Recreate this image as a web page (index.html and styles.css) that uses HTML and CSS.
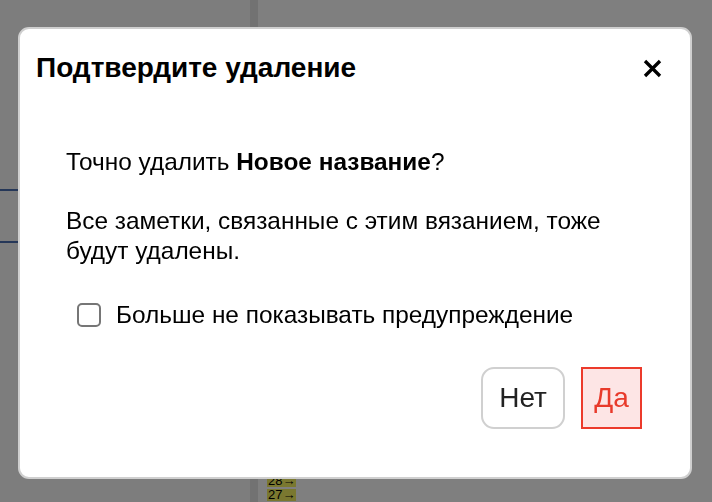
FILE: index.html
```html
<!DOCTYPE html>
<html lang="ru">
<head>
<meta charset="utf-8">
<title>Подтвердите удаление</title>
<link rel="stylesheet" href="styles.css">
</head>
<body>
<div class="page">
  <div class="sidebar">
    <div class="side-row"></div>
    <div class="side-row"></div>
  </div>
  <div class="divider"></div>
  <div class="content">
    <div class="list">
      <span class="tag">28→</span>
      <span class="tag">27→</span>
    </div>
  </div>
</div>
<div class="overlay"></div>
<div class="modal" role="dialog">
  <div class="modal-header">
    <h2 class="modal-title">Подтвердите удаление</h2>
    <button class="close" aria-label="Закрыть">
      <svg width="19" height="19" viewBox="0 0 19 19"><path d="M2 2 L17 17 M17 2 L2 17" stroke="#000" stroke-width="3.3" fill="none"/></svg>
    </button>
  </div>
  <div class="modal-body">
    <p class="q">Точно удалить <b>Новое название</b>?</p>
    <p class="note">Все заметки, связанные с этим вязанием, тоже будут удалены.</p>
    <label class="check"><span class="box"></span>Больше не показывать предупреждение</label>
  </div>
  <div class="modal-footer">
    <button class="btn btn-no">Нет</button>
    <button class="btn btn-yes">Да</button>
  </div>
</div>
</body>
</html>
```

FILE: styles.css
```css
html, body {
  margin: 0;
  padding: 0;
  height: 100%;
  font-family: "Liberation Sans", Arial, sans-serif;
}
.page {
  display: flex;
  height: 502px;
  background: #fff;
}
.sidebar {
  width: 250px;
  background: #fbfbfb;
  padding-top: 189px;
  box-sizing: border-box;
}
.side-row {
  height: 52px;
  border-top: 2px solid #4a6fb0;
  box-sizing: border-box;
}
.divider {
  width: 8px;
  background: #e4e4e4;
}
.content {
  flex: 1;
  background: #fff;
  display: flex;
  flex-direction: column;
  justify-content: flex-end;
  padding-left: 9px;
}
.list {
  display: flex;
  flex-direction: column;
  align-items: flex-start;
  gap: 2px;
  padding-bottom: 1px;
}
.tag {
  background: #f4f060;
  font-size: 13px;
  line-height: 12px;
  padding: 0 1px;
  color: #000;
}
.overlay {
  position: fixed;
  inset: 0;
  background: rgba(0,0,0,0.5);
}
.modal {
  position: fixed;
  left: 18px;
  top: 27px;
  width: 674px;
  height: 452px;
  box-sizing: border-box;
  background: #fff;
  border: 2px solid #cfcfcf;
  border-radius: 11px;
  display: flex;
  flex-direction: column;
}
.modal-header {
  display: flex;
  align-items: center;
  justify-content: space-between;
  padding: 23px 28px 0 16px;
}
.modal-title {
  margin: 0;
  font-size: 28px;
  line-height: 32px;
  font-weight: bold;
  color: #000;
}
.close {
  border: 0;
  background: none;
  padding: 0;
  width: 19px;
  height: 19px;
  display: flex;
}
.modal-body {
  padding: 63px 40px 0 46px;
  font-size: 24.4px;
  line-height: 30px;
  color: #000;
}
.modal-body p {
  margin: 0;
}
.note {
  margin-top: 29px !important;
}
.check {
  display: flex;
  align-items: center;
  margin-top: 34px;
  padding-left: 11px;
}
.box {
  width: 20px;
  height: 20px;
  border: 2px solid #767676;
  border-radius: 5px;
  margin-right: 15px;
  flex: none;
}
.modal-footer {
  display: flex;
  justify-content: flex-end;
  gap: 16px;
  padding: 37px 48px 0 0;
}
.btn {
  height: 62px;
  font-family: "Liberation Sans", Arial, sans-serif;
  font-size: 28px;
  box-sizing: border-box;
  padding: 0;
}
.btn-no {
  width: 84px;
  background: #fff;
  border: 2px solid #d0d0d0;
  border-radius: 13px;
  color: #222;
}
.btn-yes {
  width: 61px;
  background: #fde5e5;
  border: 2px solid #ec3a2b;
  border-radius: 0;
  color: #e83a2b;
}
```
